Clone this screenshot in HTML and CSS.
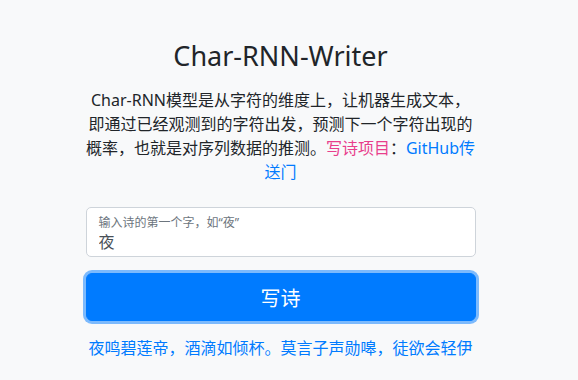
FILE: index.html
```html
<!DOCTYPE html>
<html>
<head>
    <title>Char-RNN-Writer</title>
    <link rel="stylesheet" href="styles.css">
</head>
<body>
    <div class="container">
        <h2 class="title">Char-RNN-Writer</h2>
        <p class="intro">
            Char-RNN模型是从字符的维度上，让机器生成文本，即通过已经观测到的字符出发，预测下一个字符出现的概率，也就是对序列数据的推测。<span class="project">写诗项目</span>：<a href="#">GitHub传送门</a>
        </p>
        <form id="poemForm">
            <div class="floating">
                <label for="firstChar">输入诗的第一个字，如“夜”</label>
                <input type="text" id="firstChar" value="夜">
            </div>
            <button type="submit" class="btn-write">写诗</button>
        </form>
        <p class="poem">夜鸣碧莲帝，酒滴如倾杯。莫言子声勋嗥，徒欲会轻伊</p>
    </div>
</body>
</html>
```

FILE: styles.css
```css
body {
    margin: 0;
    padding: 0 17px 0 0;
    background-color: #f8f9fa;
    color: #212529;
    font-family: "Noto Sans", "Noto Sans CJK SC", sans-serif;
    font-size: 16px;
    line-height: 1.5;
}
.container {
    width: 390px;
    margin: 0 auto;
    text-align: center;
}
.title {
    font-weight: 400;
    font-size: 27px;
    line-height: 1.2;
    margin: 0;
    padding-top: 40px;
    padding-bottom: 16px;
}
.intro {
    margin: 0 0 23px 0;
}
.project {
    color: #e83e8c;
}
a {
    color: #007bff;
    text-decoration: none;
}
.floating {
    position: relative;
    text-align: left;
}
.floating label {
    position: absolute;
    top: 7px;
    left: 13px;
    font-size: 12px;
    color: #6c757d;
}
.floating input {
    box-sizing: border-box;
    width: 100%;
    height: 50px;
    padding: 22px 12px 4px 12px;
    font-family: inherit;
    font-size: 16px;
    color: #495057;
    background: white;
    border: 1px solid #ced4da;
    border-radius: 5px;
    margin: 0;
}
.btn-write {
    display: block;
    box-sizing: border-box;
    width: 100%;
    height: 48px;
    margin: 16px 0 0 0;
    background: #007bff;
    color: white;
    font-family: inherit;
    font-size: 20px;
    border: 1px solid #007bff;
    border-radius: 6px;
    box-shadow: 0 0 0 3px rgba(0, 123, 255, 0.5);
    cursor: pointer;
}
.poem {
    margin: 15px 0 0 0;
    color: #007bff;
}
```
